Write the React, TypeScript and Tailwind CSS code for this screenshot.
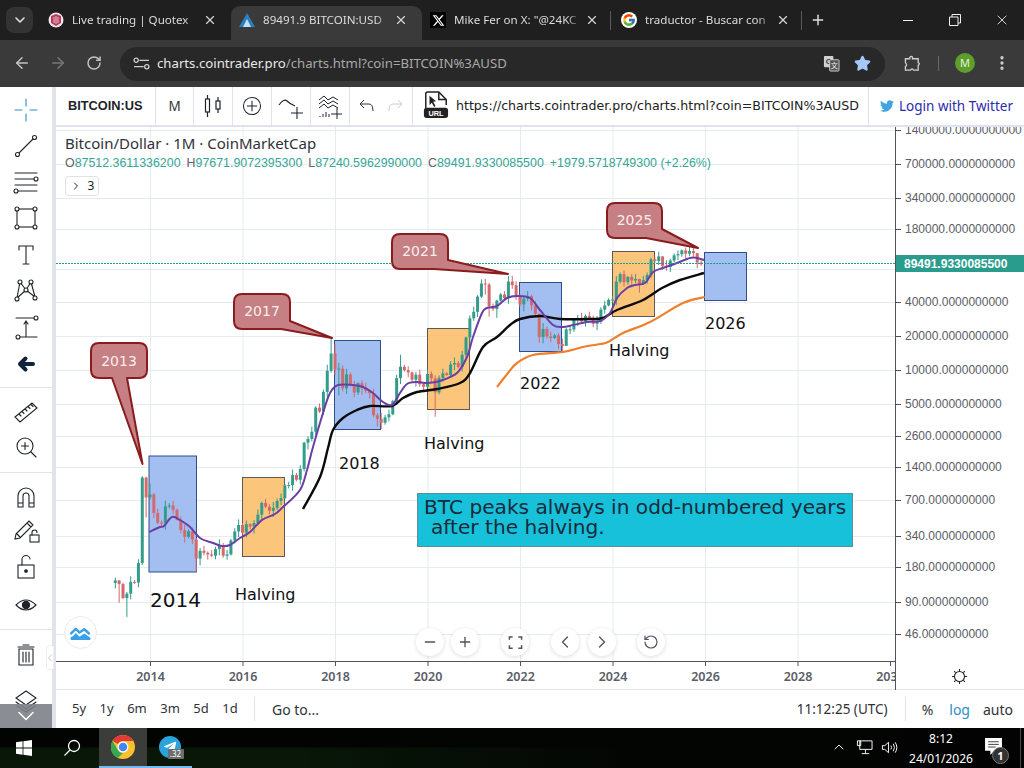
import { ArrowLeft, ArrowRight, ChevronDown, ChevronLeft, ChevronRight, ChevronUp, Minus, MoreVertical, Plus, RotateCcw, RotateCw, Star, X } from "lucide-react";
import { FaTelegramPlane, FaTwitter } from "react-icons/fa";
import { FaXTwitter } from "react-icons/fa6";
import { FcGoogle } from "react-icons/fc";

// monthly closes from 2013-04
const closes = [
  139, 129, 97, 106, 135, 133, 198, 1130, 754,
  803, 550, 450, 445, 628, 640, 585, 480, 387, 338, 378, 320,
  217, 254, 244, 236, 230, 263, 284, 230, 236, 314, 377, 430,
  368, 437, 416, 448, 531, 673, 624, 575, 609, 701, 742, 963,
  970, 1190, 1080, 1348, 2300, 2480, 2875, 4700, 4340, 6470, 9950, 14150,
  10220, 10390, 6970, 9240, 7490, 6400, 7730, 7030, 6625, 6317, 4017, 3742,
  3457, 3854, 4105, 5350, 8574, 10817, 10085, 9630, 8293, 9199, 7569, 7193,
  9350, 8523, 6424, 8624, 9454, 9137, 11323, 11680, 10784, 13780, 19625, 29001,
  33114, 45137, 58918, 57750, 37332, 35040, 41626, 47166, 43790, 61318, 57005, 46306,
  38483, 43193, 45538, 37714, 31792, 19784, 23336, 20049, 19431, 20495, 17168, 16547,
  23139, 23147, 28478, 29268, 27219, 30477, 29230, 25940, 26967, 34667, 37712, 42265,
  42582, 61198, 71333, 60636, 67491, 62678, 64619, 58969, 63329, 70215, 96449, 93429,
  102405, 84373, 82548, 94207, 104638, 107135, 115758, 108236, 114056, 109556, 90394, 87512,
];

const wickOverride: Record<string, [number?, number?]> = {
  "2013-4": [147, 118],
  "2013-5": [140, 88],
  "2013-7": [110, 66],
  "2013-11": [1163, 190],
  "2013-12": [1150, 500],
  "2014-1": [1000, 720],
  "2015-1": [330, 166],
  "2017-12": [19700, 9600],
  "2018-1": [17100, 9100],
  "2018-2": [11700, 6000],
  "2018-12": [4200, 3200],
  "2019-6": [13800, 7600],
  "2020-3": [9100, 3900],
  "2021-4": [64800, 47000],
  "2021-5": [59500, 30000],
  "2021-7": [42400, 29300],
  "2021-11": [69000, 53000],
  "2022-6": [31900, 17600],
  "2022-11": [21400, 15500],
  "2023-1": [23900, 16500],
  "2024-3": [73800, 59000],
  "2024-8": [65000, 49000],
  "2024-11": [99800, 66800],
  "2025-2": [102700, 78200],
  "2025-3": [95000, 76600],
  "2025-4": [97900, 74500],
  "2025-10": [126000, 102000],
  "2025-11": [110000, 80600],
  "2025-12": [94500, 84500],
};

const wickPattern = [0.05, 0.1, 0.03, 0.07, 0.12, 0.04, 0.08, 0.02, 0.06, 0.11, 0.03, 0.09, 0.05, 0.13];

const priceY = (p: number) => 263 + (4.952 - Math.log10(p)) * 113;
const monthX = (i: number) => 115.3 + i * 3.854;

const candles = closes.map((close, i) => {
  const open = i === 0 ? 132 : closes[i - 1];
  const month = i + 3;
  const key = `${2013 + Math.floor(month / 12)}-${(month % 12) + 1}`;
  const over = wickOverride[key] ?? [];
  const f = wickPattern[i % wickPattern.length];
  const g = wickPattern[(i + 5) % wickPattern.length];
  const high = over[0] ?? Math.max(open, close) * (1 + f);
  const low = over[1] ?? Math.min(open, close) * (1 - g);
  return { x: monthX(i), open, close, high, low };
});

// moving averages, read off the chart
const purpleLine: [number, number][] = [
  [149, 532], [160, 527], [164, 526], [172, 517], [180, 520], [190, 527], [200, 538], [213, 543], [222, 546], [230, 545],
  [240, 538], [250, 532], [262, 520], [275, 514], [283, 507], [300, 490], [307, 470], [313, 447], [323, 413], [330, 393],
  [338, 385], [353, 385], [363, 387], [373, 393], [383, 402], [392, 405], [400, 393], [407, 384], [417, 382], [427, 383],
  [440, 381], [457, 373], [467, 357], [473, 337], [482, 313], [487, 308], [497, 306], [507, 298], [517, 296], [530, 298],
  [540, 310], [553, 325], [563, 327], [573, 325], [587, 322], [600, 321], [610, 313], [617, 298], [627, 288], [635, 285],
  [645, 283], [653, 272], [663, 268], [677, 263], [690, 258], [697, 258], [704, 260],
];
const blackLine: [number, number][] = [
  [303, 509], [320, 477], [328, 448], [333, 430], [343, 418], [357, 410], [370, 406], [392, 406], [403, 398], [417, 392],
  [437, 389], [460, 383], [470, 373], [483, 347], [497, 337], [510, 325], [520, 319], [540, 316], [560, 319], [590, 319],
  [603, 318], [617, 310], [643, 300], [662, 288], [680, 280], [704, 273],
];
const orangeLine: [number, number][] = [
  [497, 387], [508, 373], [517, 363], [533, 355], [563, 352], [583, 347], [600, 344], [608, 342], [623, 333], [650, 322],
  [683, 303], [705, 297],
];

// catmull-rom through the waypoints
const smoothPath = (pts: [number, number][]) => {
  let d = `M${pts[0][0]} ${pts[0][1]}`;
  for (let i = 0; i < pts.length - 1; i++) {
    const p0 = pts[Math.max(i - 1, 0)];
    const p1 = pts[i];
    const p2 = pts[i + 1];
    const p3 = pts[Math.min(i + 2, pts.length - 1)];
    const c1x = p1[0] + (p2[0] - p0[0]) / 6;
    const c1y = p1[1] + (p2[1] - p0[1]) / 6;
    const c2x = p2[0] - (p3[0] - p1[0]) / 6;
    const c2y = p2[1] - (p3[1] - p1[1]) / 6;
    d += `C${c1x.toFixed(1)} ${c1y.toFixed(1)} ${c2x.toFixed(1)} ${c2y.toFixed(1)} ${p2[0]} ${p2[1]}`;
  }
  return d;
};

const gridY = [130, 164, 198, 229, 269, 302, 336, 370, 404, 436, 467, 500, 536, 567, 602, 634];
const years = [2014, 2016, 2018, 2020, 2022, 2024, 2026, 2028, 2030];
const yearX = (y: number) => 150.5 + (y - 2014) * 46.25;

const priceLabels: [string, number][] = [
  ["1400000", 130], ["700000", 164], ["340000", 198], ["180000", 229], ["40000", 302], ["20000", 336],
  ["10000", 370], ["5000", 404], ["2600", 436], ["1400", 467], ["700", 500], ["340", 536],
  ["180", 567], ["90", 602], ["46", 634],
];

const boxes = [
  { x: 149, y: 456, w: 47.5, h: 116, blue: true },
  { x: 242.5, y: 477.5, w: 42, h: 79, blue: false },
  { x: 334.5, y: 340.5, w: 46, h: 89, blue: true },
  { x: 427.5, y: 328.5, w: 42, h: 81, blue: false },
  { x: 519.5, y: 282.5, w: 42, h: 69, blue: true },
  { x: 612.5, y: 251.5, w: 42, h: 65, blue: false },
  { x: 704.5, y: 252.5, w: 42, h: 48, blue: true },
];

const chartLabels: [string, number, number, number][] = [
  ["2014", 150, 607, 20],
  ["Halving", 235, 600, 16],
  ["2018", 339, 469, 16],
  ["Halving", 424, 449, 16],
  ["2022", 520, 389, 16],
  ["Halving", 609, 356, 16],
  ["2026", 705, 329, 16],
];

const callouts = [
  { d: "M99 343H139Q147 343 147 351V370Q147 378 139 378H127L142.5 464L112 378H99Q91 378 91 370V351Q91 343 99 343Z", text: "2013", x: 119, y: 366 },
  { d: "M242 294H282Q290 294 290 302V321L332 338L281 329H242Q234 329 234 321V302Q234 294 242 294Z", text: "2017", x: 262, y: 316 },
  { d: "M400 234H440Q448 234 448 242V260L508 274L434 269H400Q392 269 392 261V242Q392 234 400 234Z", text: "2021", x: 420, y: 256 },
  { d: "M615 203H654Q662 203 662 211V229L698 248L646 238H615Q607 238 607 230V211Q607 203 615 203Z", text: "2025", x: 634.5, y: 225 },
];

function ChartCanvas() {
  return (
    <svg viewBox="56 127 968 563" className="absolute left-0 top-0 w-[968px] h-[563px]">
      <defs>
        <clipPath id="timeClip">
          <rect x="56" y="662" width="839" height="28" />
        </clipPath>
      </defs>
      {gridY.map((y) => (
        <line key={y} x1="56" x2="895" y1={y + 0.5} y2={y + 0.5} stroke="#e6ebf1" />
      ))}
      {years.slice(0, 8).map((y) => (
        <line key={y} x1={yearX(y)} x2={yearX(y)} y1="127" y2="662" stroke="#e6ebf1" />
      ))}

      {boxes.map((b) => (
        <rect
          key={b.x}
          x={b.x}
          y={b.y}
          width={b.w}
          height={b.h}
          fill={b.blue ? "#a3bef1" : "#fcc57c"}
          stroke={b.blue ? "#2f4f8c" : "#5d5a55"}
        />
      ))}

      {candles.map((c) => {
        const up = c.close >= c.open;
        const color = up ? "#339c8c" : "#d4696c";
        const top = priceY(Math.max(c.open, c.close));
        const bottom = priceY(Math.min(c.open, c.close));
        return (
          <g key={c.x}>
            <line x1={c.x} x2={c.x} y1={priceY(c.high)} y2={priceY(c.low)} stroke={color} />
            <rect x={c.x - 1.5} y={top} width="3" height={Math.max(bottom - top, 1)} fill={color} />
          </g>
        );
      })}

      <path d={smoothPath(orangeLine)} fill="none" stroke="#ee7f2c" strokeWidth="2.2" strokeLinejoin="round" />
      <path d={smoothPath(blackLine)} fill="none" stroke="#0b0b0b" strokeWidth="2.4" strokeLinejoin="round" />
      <path d={smoothPath(purpleLine)} fill="none" stroke="#6a3fa5" strokeWidth="2" strokeLinejoin="round" />

      <line x1="56" x2="895" y1="263.5" y2="263.5" stroke="#17a08c" strokeDasharray="2 1" />

      {callouts.map((c) => (
        <g key={c.text}>
          <path d={c.d} fill="#c67f82" stroke="#8a1c20" strokeWidth="2" strokeLinejoin="round" />
          <text x={c.x} y={c.y} textAnchor="middle" fill="#f8eeee" fontSize="14" fontFamily="'DejaVu Sans', sans-serif">
            {c.text}
          </text>
        </g>
      ))}

      {chartLabels.map(([t, x, y, s]) => (
        <text key={t + x} x={x} y={y} fill="#111" fontSize={s} fontFamily="'DejaVu Sans', sans-serif">
          {t}
        </text>
      ))}

      <rect x="417.5" y="493.5" width="435" height="53" fill="#17c1d9" stroke="#5f8d96" />
      <text x="424" y="514" fill="#1a2a3a" fontSize="20.15" fontFamily="'DejaVu Sans', sans-serif">
        BTC peaks always in odd-numbered years
      </text>
      <text x="431" y="534" fill="#1a2a3a" fontSize="20.15" fontFamily="'DejaVu Sans', sans-serif">
        after the halving.
      </text>

      <line x1="56" x2="895" y1="661.5" y2="661.5" stroke="#50535e" />
      <line x1="895.5" x2="895.5" y1="127" y2="690" stroke="#50535e" />
      <g clipPath="url(#timeClip)">
        {years.map((y) => (
          <g key={y}>
            <line x1={yearX(y)} x2={yearX(y)} y1="662" y2="666" stroke="#50535e" />
            <text x={yearX(y)} y="681" textAnchor="middle" fill="#5a5d66" fontSize="12.5" fontWeight="600" fontFamily="'Noto Sans', sans-serif">
              {y}
            </text>
          </g>
        ))}
      </g>
      {priceLabels.map(([v, y]) => (
        <g key={v}>
          <line x1="896" x2="901" y1={y + 0.5} y2={y + 0.5} stroke="#50535e" />
          <text x="905" y={y + 4} fill="#5a5d66" fontSize="12" fontWeight="500" fontFamily="'Liberation Sans', sans-serif">
            {v}.0000000000
          </text>
        </g>
      ))}
      <rect x="896" y="255" width="128" height="17" fill="#2a9c8d" />
      <text x="904" y="267.5" fill="#fff" fontSize="12" fontWeight="700" fontFamily="'Liberation Sans', sans-serif">
        89491.9330085500
      </text>

      {/* theme toggle */}
      <g fill="none" stroke="#222" strokeWidth="1.1">
        <circle cx="959.5" cy="676.5" r="5" />
        <path d="M959.5 669V671M959.5 682V684M952 676.5H954M965 676.5H967M954.2 671.2L955.6 672.6M963.4 680.4L964.8 681.8M954.2 681.8L955.6 680.4M963.4 672.6L964.8 671.2" />
      </g>
    </svg>
  );
}

function ToolIcon({ children }: { children: React.ReactNode }) {
  return (
    <div className="h-[36px] flex items-center justify-center">
      <svg viewBox="0 0 28 28" className="w-7 h-7" fill="none" stroke="#1f2328" strokeWidth="1.1" strokeLinecap="round">
        {children}
      </svg>
    </div>
  );
}

function LeftToolbar() {
  return (
    <div className="relative w-[52px] shrink-0 flex flex-col bg-white">
      <div className="pt-[5px]">
        <ToolIcon>
          <path stroke="#2b8fc9" d="M14 3V10M14 18V25M3 14H10M18 14H25" />
        </ToolIcon>
        <ToolIcon>
          <path d="M6.5 21.5L21.5 6.5" />
          <circle cx="5.5" cy="22.5" r="2" fill="#fff" />
          <circle cx="22.5" cy="5.5" r="2" fill="#fff" />
        </ToolIcon>
        <ToolIcon>
          <path d="M3 5H25M3 11H22M3 17H25M6 23H25" />
          <circle cx="24" cy="11" r="2" fill="#fff" />
          <circle cx="4" cy="23" r="2" fill="#fff" />
        </ToolIcon>
        <ToolIcon>
          <rect x="5" y="5" width="18" height="18" />
          <circle cx="5" cy="5" r="2" fill="#fff" />
          <circle cx="23" cy="5" r="2" fill="#fff" />
          <circle cx="5" cy="23" r="2" fill="#fff" />
          <circle cx="23" cy="23" r="2" fill="#fff" />
        </ToolIcon>
        <div className="pt-px">
          <ToolIcon>
            <path d="M7 9V5H21V9M14 5V23M11 23H17" />
          </ToolIcon>
        </div>
        <ToolIcon>
          <path d="M8 5L5 21M8 5L14 13M19 5L14 13M19 5L23 20M5 21L14 13L23 20" />
          <circle cx="8" cy="5" r="2" fill="#fff" />
          <circle cx="19" cy="5" r="2" fill="#fff" />
          <circle cx="14" cy="13" r="2" fill="#fff" />
          <circle cx="5" cy="22" r="2" fill="#fff" />
          <circle cx="23" cy="21" r="2" fill="#fff" />
        </ToolIcon>
        <ToolIcon>
          <path d="M4 5H23M7 24H25M14 24V9M12 11L14 8L16 11" />
          <circle cx="24" cy="5" r="2" fill="#fff" />
          <circle cx="6" cy="24" r="2" fill="#fff" />
        </ToolIcon>
        <div className="h-[38px] flex items-center justify-center">
          <svg viewBox="0 0 28 28" className="w-7 h-7" fill="none" stroke="#10243c" strokeWidth="4" strokeLinejoin="round" strokeLinecap="round">
            <path d="M9 14H21M13.5 8.5L8 14L13.5 19.5" />
          </svg>
        </div>
      </div>
      <div className="mt-[4px] border-t border-[#e0e3eb]" />
      <div className="pt-[6px]">
        <ToolIcon>
          <path d="M3 19L20 5L25 10L8 24ZM7 16L9 18M10 13.5L12 15.5M13 11L15 13M16 8.5L18 10.5M19 6.5L21 8.5" />
        </ToolIcon>
        <div className="-mt-[1px]">
          <ToolIcon>
            <circle cx="13" cy="13" r="8" />
            <path d="M19 19L24 24M13 9.5V16.5M9.5 13H16.5" />
          </ToolIcon>
        </div>
      </div>
      <div className="mt-[7px] border-t border-[#e0e3eb]" />
      <div className="pt-[6px]">
        <ToolIcon>
          <path d="M6 24V13A8 8 0 0 1 22 13V24H17V13A3 3 0 0 0 11 13V24ZM6 20H11M17 20H22" />
        </ToolIcon>
        <div className="-mt-[2px]">
          <ToolIcon>
            <path d="M4 17L17 4L21 8L8 21L3 22ZM15 6L19 10M5 17L8 20" />
            <rect x="18" y="18" width="9" height="7" />
            <path d="M20 18V15.5A2.5 2.5 0 0 1 25 15.5" />
          </ToolIcon>
        </div>
        <ToolIcon>
          <rect x="6" y="12" width="16" height="13" />
          <path d="M10 12V7A4 4 0 0 1 18 6" />
          <circle cx="14" cy="18" r="1.3" fill="#1f2328" />
        </ToolIcon>
        <div className="pt-[2px]">
          <ToolIcon>
            <path d="M4 14Q14 4 24 14Q14 24 4 14Z" />
            <circle cx="14" cy="14" r="3.6" fill="#1f2328" />
          </ToolIcon>
        </div>
      </div>
      <div className="mt-[6px] border-t border-[#e0e3eb]" />
      <div className="pt-[7px]">
        <ToolIcon>
          <path d="M7 8H21V24H7ZM6 6H22M11 4H17M11 11V21M14 11V21M17 11V21" />
        </ToolIcon>
      </div>
      <div className="mt-[9px]">
        <ToolIcon>
          <path d="M14 5L24 12L14 19L4 12ZM4 16L14 23L24 16M5 20L14 26L23 20" />
        </ToolIcon>
      </div>
      <div className="absolute left-0 bottom-0 w-[52px] h-[24px] bg-[#7e8188]/90 flex items-center justify-center">
        <ChevronDown className="w-7 h-7 text-white" strokeWidth={1.3} />
      </div>
      <div className="absolute left-[46px] top-[558px] w-[8px] h-[25px] bg-white rounded-[3px] border border-[#eceef2] flex items-center justify-center z-10">
        <ChevronLeft className="w-3 h-3 text-[#9aa0ab] shrink-0" strokeWidth={1.2} />
      </div>
    </div>
  );
}

function ToolCell({ w, children }: { w: string; children: React.ReactNode }) {
  return <div className={`${w} h-full flex items-center justify-center border-r border-[#e0e3eb] shrink-0`}>{children}</div>;
}

function TopToolbar() {
  return (
    <div className="h-[38px] shrink-0 flex items-center bg-white border-b-2 border-[#e0e3eb] font-['Noto_Sans',sans-serif] box-content">
      <div className="w-[100px] h-full flex items-center pl-[12px] pr-[12px] border-r border-[#e0e3eb] shrink-0">
        <span className="overflow-hidden whitespace-nowrap text-[12.8px] font-bold text-[#1f2328] font-['Liberation_Sans',sans-serif]">BITCOIN:USD</span>
      </div>
      <div className="w-[38px] h-full flex items-center justify-center border-r border-[#e0e3eb] shrink-0 text-[13.5px] text-[#333]">M</div>
      <ToolCell w="w-[39px]">
        <svg viewBox="0 0 28 28" className="w-7 h-7" fill="none" stroke="#1f2328" strokeWidth="1.2">
          <rect x="6.5" y="7" width="4" height="13" />
          <path d="M8.5 3V7M8.5 20V25" />
          <rect x="17" y="9" width="4" height="8" />
          <path d="M19 5V9M19 17V21" />
        </svg>
      </ToolCell>
      <ToolCell w="w-[39px]">
        <svg viewBox="0 0 28 28" className="w-[24px] h-[24px]" fill="none" stroke="#1f2328" strokeWidth="1.2">
          <circle cx="14" cy="14" r="10" />
          <path d="M14 8V20M8 14H20" />
        </svg>
      </ToolCell>
      <ToolCell w="w-[39px]">
        <svg viewBox="0 0 28 28" className="w-7 h-7" fill="none" stroke="#1f2328" strokeWidth="1.1">
          <path d="M2 13Q7 6 10 9T18 14M14 21H26M20 15V27" />
        </svg>
      </ToolCell>
      <ToolCell w="w-[39px]">
        <svg viewBox="0 0 28 28" className="w-7 h-7" fill="none" stroke="#1f2328" strokeWidth="1">
          <path d="M3 8L8 4L12 8L17 5L22 8M3 12L8 8L12 12L17 9L22 12M3 16L8 12L12 16L17 13L22 16M4 25V24M7 25V22M10 25V20M13 25V22M15 22H26M21 16V27" />
        </svg>
      </ToolCell>
      <div className="w-[63px] h-full flex items-center justify-center gap-[12px] border-r border-[#e0e3eb] shrink-0">
        <svg viewBox="0 0 16 16" className="w-4 h-4" fill="none" stroke="#333" strokeWidth="1">
          <path d="M1 6H10Q14 6 14 13M1 6L5 2M1 6L5 10" />
        </svg>
        <svg viewBox="0 0 16 16" className="w-4 h-4" fill="none" stroke="#c8cbd2" strokeWidth="1">
          <path d="M15 6H6Q2 6 2 13M15 6L11 2M15 6L11 10" />
        </svg>
      </div>
      <div className="flex-1 h-full flex items-center pl-[10px] gap-[7px] border-r border-[#e0e3eb] min-w-0">
        <svg viewBox="0 0 28 32" className="w-[26px] h-[30px] shrink-0">
          <path d="M3 20V3Q3 1 5 1H17L25 9V15" fill="none" stroke="#222" strokeWidth="1.6" />
          <path d="M17 1V9H25" fill="none" stroke="#222" strokeWidth="1.6" />
          <path d="M7 5V15L9.5 12.5L12 17L13.5 16L11 11.5L14 11Z" fill="#222" />
          <rect x="1" y="18" width="26" height="11" rx="3" fill="#222" />
          <text x="14" y="26.5" textAnchor="middle" fill="#fff" fontSize="8" fontWeight="700" fontFamily="'Liberation Sans', sans-serif">URL</text>
        </svg>
        <span className="text-[12.6px] whitespace-nowrap text-[#222] font-['DejaVu_Sans',sans-serif]">https://charts.cointrader.pro/charts.html?coin=BITCOIN%3AUSD</span>
      </div>
      <div className="w-[155px] h-full flex items-center pl-[11px] gap-[5px] shrink-0">
        <FaTwitter className="w-[14px] h-[14px] text-[#42a5e0]" />
        <span className="text-[13.5px] text-[#2a2cae] whitespace-nowrap font-['Noto_Sans',sans-serif]">Login with Twitter</span>
      </div>
    </div>
  );
}

function Legend() {
  return (
    <div className="absolute left-[9px] top-[5px] font-['Noto_Sans',sans-serif]">
      <div className="text-[15px] leading-[22px] text-[#2f3238] whitespace-nowrap">Bitcoin/Dollar · 1M · CoinMarketCap</div>
      <div className="flex gap-[6px] text-[12.4px] leading-[18px] text-[#35a596] font-['Liberation_Sans',sans-serif] whitespace-nowrap">
        <span><span className="text-[#5f6268]">O</span>87512.3611336200</span>
        <span><span className="text-[#5f6268]">H</span>97671.9072395300</span>
        <span><span className="text-[#5f6268]">L</span>87240.5962990000</span>
        <span><span className="text-[#5f6268]">C</span>89491.9330085500</span>
        <span>+1979.5718749300 (+2.26%)</span>
      </div>
      <div className="mt-[4px] w-[34px] h-[20px] border border-[#dfe2e8] rounded-[3px] flex items-center justify-center gap-[6px] text-[12px] text-[#222]">
        <ChevronRight className="w-3 h-3" />
        <span>3</span>
      </div>
    </div>
  );
}

function ChartControls() {
  const btn = "w-7 h-7 rounded-full bg-white shadow-[0_1px_4px_rgba(0,0,0,0.14)] flex items-center justify-center text-[#50535e]";
  return (
    <div className="absolute left-[360px] top-[501px] flex">
      <div className={btn}><Minus className="w-4 h-4" /></div>
      <div className={`${btn} ml-[7px]`}><Plus className="w-4 h-4" /></div>
      <div className={`${btn} ml-[22px]`}>
        <svg viewBox="0 0 16 16" className="w-[15px] h-[15px]" fill="none" stroke="#50535e" strokeWidth="1.6">
          <path d="M1.5 5V2H5M11 2H14.5V5M14.5 11V14H11M5 14H1.5V11" />
        </svg>
      </div>
      <div className={`${btn} ml-[22px]`}><ChevronLeft className="w-5 h-5" strokeWidth={1.6} /></div>
      <div className={`${btn} ml-[9px]`}><ChevronRight className="w-5 h-5" strokeWidth={1.6} /></div>
      <div className={`${btn} ml-[21px]`}><RotateCcw className="w-4 h-4" strokeWidth={1.8} /></div>
    </div>
  );
}

function BottomBar() {
  return (
    <div className="h-[38px] shrink-0 flex items-center bg-white text-[#2f3238] font-['Noto_Sans',sans-serif] whitespace-nowrap">
      <div className="flex items-center gap-[13.5px] w-[199px] pl-[16px] h-[24px] border-r border-[#e0e3eb] text-[13px]">
        <span>5y</span>
        <span>1y</span>
        <span>6m</span>
        <span>3m</span>
        <span>5d</span>
        <span>1d</span>
      </div>
      <span className="ml-[17px] text-[14px]">Go to...</span>
      <span className="ml-auto pr-[17px] h-[24px] leading-[24px] border-r border-[#e0e3eb] text-[13.5px]">11:12:25 (UTC)</span>
      <span className="ml-[16px] text-[14px]">%</span>
      <span className="ml-[16px] text-[14px] text-[#2b8fc9]">log</span>
      <span className="ml-[13px] mr-[11px] text-[14px]">auto</span>
    </div>
  );
}

function Tab({ title, icon, active, sep }: { title: string; icon: React.ReactNode; active?: boolean; sep?: boolean }) {
  return (
    <div className={`relative w-[191px] h-[34px] shrink-0 flex items-center pl-[8px] pb-[6px] rounded-t-[9px] ${active ? "bg-[#3a3a3a]" : ""}`}>
      <div className="w-[16px] h-[16px] flex items-center justify-center shrink-0">{icon}</div>
      <span className="ml-[8px] w-[128px] overflow-hidden whitespace-nowrap text-[11.6px] text-[#dcdcdc] [mask-image:linear-gradient(90deg,#000_88%,transparent)]">{title}</span>
      <X className="absolute left-[163px] top-[7px] w-[14px] h-[14px] text-[#d5d5d5]" strokeWidth={2} />
      {sep && <div className="absolute right-[2px] top-[5px] w-px h-[19px] bg-[#5a5a5a]" />}
    </div>
  );
}

function ChromeLogo({ size }: { size: number }) {
  return (
    <svg viewBox="0 0 48 48" style={{ width: size, height: size }}>
      <circle cx="24" cy="24" r="24" fill="#fbc02d" />
      <path d="M24 0A24 24 0 0 1 44.8 12H24A12 12 0 0 0 13.6 18L3.2 12A24 24 0 0 1 24 0Z" fill="#e53935" />
      <path d="M3.2 12L13.6 30A12 12 0 0 0 24 36L13.6 46A24 24 0 0 1 3.2 12Z" fill="#34a853" />
      <circle cx="24" cy="24" r="11" fill="#fff" />
      <circle cx="24" cy="24" r="8.5" fill="#4285f4" />
    </svg>
  );
}

function TabStrip() {
  return (
    <div className="h-[40px] shrink-0 bg-[#1f1f1f] flex items-end font-['Noto_Sans',sans-serif] relative">
      <div className="absolute left-[6px] top-[7px] w-[27px] h-[26px] rounded-[8px] bg-[#333] flex items-center justify-center">
        <ChevronDown className="w-4 h-4 text-[#e0e0e0]" strokeWidth={2.4} />
      </div>
      <div className="ml-[40px] flex items-end">
        <Tab
          title="Live trading | Quotex"
          icon={
            <svg viewBox="0 0 16 16" className="w-4 h-4">
              <circle cx="8" cy="8" r="7.5" fill="#f3e6ea" />
              <path d="M3 4L8 2L13 4V11L8 14L3 11Z" fill="#b83a5c" />
              <path d="M6 5V11M8 4V12M10 5V11" stroke="#f3e6ea" strokeWidth="0.8" />
            </svg>
          }
        />
        <Tab
          active
          title="89491.9 BITCOIN:USD"
          icon={
            <svg viewBox="0 0 16 16" className="w-4 h-4">
              <path d="M8 1L0 15H5L8 9L11 15H16Z" fill="#2b7fc1" />
              <path d="M8 7L4 15H12Z" fill="#bfe3f5" />
            </svg>
          }
        />
        <Tab title={'Mike Fer on X: "@24KC'} sep icon={<span className="w-4 h-4 bg-black flex items-center justify-center"><FaXTwitter className="w-[13px] h-[13px] text-white" /></span>} />
        <Tab title="traductor - Buscar con" sep icon={<span className="w-4 h-4 bg-white rounded-full flex items-center justify-center"><FcGoogle className="w-[14px] h-[14px]" /></span>} />
      </div>
      <Plus className="absolute left-[810px] top-[12px] w-4 h-4 text-[#e0e0e0]" strokeWidth={2.2} />
      <div className="absolute right-[14px] top-[12px] flex items-center gap-[33px] text-[#f0f0f0]">
        <div className="w-[10px] h-px bg-[#f0f0f0] mr-[3px]" />
        <svg viewBox="0 0 12 12" className="w-[12px] h-[12px]" fill="none" stroke="#f0f0f0">
          <path d="M0.5 3H9V11.5H0.5ZM3 3V0.5H11.5V9H9" />
        </svg>
        <X className="w-[16px] h-[16px]" strokeWidth={1.3} />
      </div>
    </div>
  );
}

function AddressBar() {
  return (
    <div className="h-[47px] shrink-0 bg-[#3a3a3a] flex items-center relative font-['Noto_Sans',sans-serif]">
      <ArrowLeft className="absolute left-[13px] top-[14px] w-[18px] h-[18px] text-[#c4c4c4]" strokeWidth={2} />
      <ArrowRight className="absolute left-[49px] top-[14px] w-[18px] h-[18px] text-[#777]" strokeWidth={2} />
      <RotateCw className="absolute left-[86px] top-[15px] w-[16px] h-[16px] text-[#c4c4c4]" strokeWidth={2.2} />
      <div className="ml-[120px] w-[765px] h-[34px] rounded-full bg-[#282828] flex items-center pl-[13px] pr-[14px]">
        <svg viewBox="0 0 16 16" className="w-[17px] h-[17px] shrink-0" fill="none" stroke="#cfcfcf" strokeWidth="1.2">
          <path d="M6 5H15M1 11H10" />
          <circle cx="3" cy="5" r="2" />
          <circle cx="13" cy="11" r="2" />
        </svg>
        <span className="ml-[7px] text-[13.2px] whitespace-nowrap text-[#e8e8e8]">
          charts.cointrader.pro<span className="text-[#a8a8a8]">/charts.html?coin=BITCOIN%3AUSD</span>
        </span>
        <svg viewBox="0 0 18 18" className="ml-auto w-[17px] h-[17px] shrink-0">
          <rect x="1" y="1" width="10" height="12" rx="1" fill="#d0d0d0" />
          <text x="6" y="10" textAnchor="middle" fontSize="8" fontWeight="700" fill="#333" fontFamily="'Liberation Sans', sans-serif">G</text>
          <rect x="7" y="5" width="10" height="12" rx="1" fill="#555" stroke="#d0d0d0" />
          <text x="12" y="14" textAnchor="middle" fontSize="7.5" fill="#eee" fontFamily="'Noto Sans CJK SC', sans-serif">文</text>
        </svg>
        <Star className="ml-[14px] w-[17px] h-[17px] text-[#a8c7fa] fill-[#a8c7fa] shrink-0" />
      </div>
      <svg viewBox="0 0 18 18" className="absolute left-[904px] top-[15px] w-[17px] h-[17px]" fill="none" stroke="#d0d0d0" strokeWidth="1.4">
        <path d="M1.5 4H6V2.5Q8 0.5 9 2.5V4H15V8Q17.5 9 15 11V16H10Q9 13.5 7 16H1.5V12Q4 11 1.5 8Z" />
      </svg>
      <div className="absolute left-[938px] top-[16px] w-px h-[15px] bg-[#666]" />
      <div className="absolute left-[955px] top-[13px] w-[20px] h-[20px] rounded-full bg-[#5e9e2d] flex items-center justify-center text-[11px] text-[#e6f2d6]">M</div>
      <MoreVertical className="absolute left-[993px] top-[14px] w-[18px] h-[18px] text-[#d0d0d0]" strokeWidth={2.4} />
    </div>
  );
}

function Taskbar() {
  return (
    <div className="h-[40px] shrink-0 flex items-center relative text-white bg-[linear-gradient(180deg,#020402_0%,#020402_46%,#081708_52%,#081708_100%)] font-['Noto_Sans',sans-serif]">
      <div className="absolute left-[300px] top-0 w-[724px] h-[40px] bg-[linear-gradient(90deg,transparent_0%,#030503_45%,#020302_100%)]" />
      <svg viewBox="0 0 16 16" className="absolute left-[16px] top-[12px] w-[16px] h-[16px]" fill="#fff">
        <path d="M0 2.2L6.6 1.3V7.6H0ZM7.4 1.2L16 0V7.6H7.4ZM0 8.4H6.6V14.7L0 13.8ZM7.4 8.4H16V16L7.4 14.8Z" />
      </svg>
      <svg viewBox="0 0 18 18" className="absolute left-[63px] top-[11px] w-[18px] h-[18px]" fill="none" stroke="#fff" strokeWidth="1.3">
        <circle cx="11" cy="7" r="5.5" />
        <path d="M7 11L1.5 16.5" />
      </svg>
      <div className="absolute left-[99px] top-0 w-[48px] h-[40px] bg-[#3a3d3a] flex items-center justify-center border-b-[2px] border-[#76b9ed]">
        <ChromeLogo size={24} />
      </div>
      <div className="absolute left-[147px] top-0 w-[45px] h-[40px] flex items-center justify-center border-b-[2px] border-[#76b9ed]">
        <div className="relative w-[22px] h-[22px] rounded-full bg-[#2aa3dc] flex items-center justify-center">
          <FaTelegramPlane className="w-[14px] h-[14px] text-white" />
          <span className="absolute left-[9px] top-[13px] w-[16px] h-[10px] bg-[#6d6d6d] rounded-[1px] text-[8px] leading-[10px] text-center text-white">.32</span>
        </div>
      </div>
      <ChevronUp className="absolute left-[831px] top-[11px] w-[16px] h-[16px]" strokeWidth={1.4} />
      <svg viewBox="0 0 18 18" className="absolute left-[856px] top-[11px] w-[17px] h-[17px]" fill="none" stroke="#fff">
        <path d="M6 2H17V11H4V2ZM1.5 2H5V7H1.5ZM10 11V15M6 15.5H14" />
      </svg>
      <svg viewBox="0 0 18 18" className="absolute left-[881px] top-[11px] w-[17px] h-[17px]" fill="none" stroke="#fff">
        <path d="M1.5 7V11H4L8 14.5V3.5L4 7ZM10.5 7Q12 9 10.5 11M13 5Q15.5 9 13 13M15 3.5Q18.5 9 15 14.5" />
      </svg>
      <div className="absolute left-[905px] top-[1px] w-[72px] text-center text-[12px] leading-[20px]">
        <div>8:12</div>
        <div>24/01/2026</div>
      </div>
      <svg viewBox="0 0 18 18" className="absolute left-[984px] top-[9px] w-[19px] h-[19px]" fill="#fff">
        <path d="M1 1H17V13H10L6 17V13H1Z" />
        <path d="M4 4.5H14M4 7H14M4 9.5H11" stroke="#222" strokeWidth="0.8" />
      </svg>
      <div className="absolute left-[992px] top-[19px] w-[17px] h-[17px] rounded-full bg-[#333] border border-[#777] text-[11px] leading-[15px] text-center font-bold">1</div>
      <div className="absolute right-[3px] top-0 w-px h-[40px] bg-[#4a4a4a]" />
    </div>
  );
}

export default function App() {
  return (
    <div className="w-[1024px] h-[768px] overflow-hidden flex flex-col bg-white">
      <TabStrip />
      <AddressBar />
      <div className="flex-1 flex min-h-0">
        <LeftToolbar />
        <div className="w-[4px] shrink-0 bg-[#e0e3eb]" />
        <div className="flex-1 min-w-0 flex flex-col">
          <TopToolbar />
          <div className="relative h-[563px] shrink-0 border-b border-[#e0e3eb] box-border">
            <ChartCanvas />
            <Legend />
            <ChartControls />
            <div className="absolute left-[8px] top-[489px] w-[33px] h-[33px] rounded-full bg-white border border-[#e8eaef] flex items-center justify-center">
              <svg viewBox="0 0 24 17" className="w-[23px] h-[16px]">
                <path d="M2 9L7 4L11 8L16 4.5L21 9" fill="none" stroke="#3aa0e8" strokeWidth="2.6" strokeLinejoin="round" strokeLinecap="round" />
                <path d="M2 16Q0 13 4 12L7 8.5L11 12.5L16 9L21 12.5Q24 14 22 16Z" fill="#3aa0e8" />
              </svg>
            </div>
          </div>
          <BottomBar />
        </div>
      </div>
      <Taskbar />
    </div>
  );
}
